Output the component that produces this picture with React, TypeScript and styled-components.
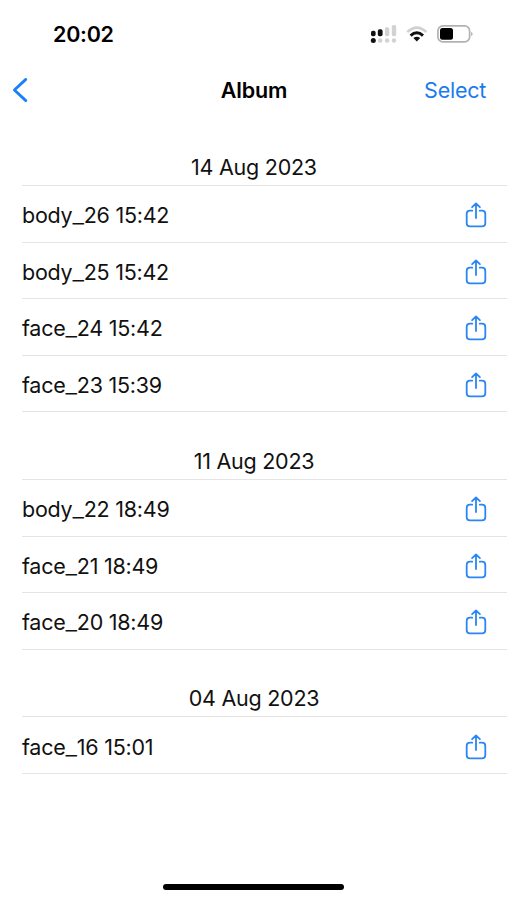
import React from "react";
import styled, { createGlobalStyle } from "styled-components";

const Global = createGlobalStyle`
  *{box-sizing:border-box}
  body{margin:0;background:#fff;color:#111;font-family:Inter,sans-serif}
  button{font:inherit;color:#1a7bf0;background:none;border:0;padding:0}
`;
const Screen = styled.main`
  width:507px;height:900px;overflow:hidden;display:flex;flex-direction:column;
`;
const Status = styled.header`
  height:66px;flex:none;padding:2px 33px 0 53px;display:flex;align-items:center;justify-content:space-between;
`;
const Time = styled.time`font-size:21.5px;font-weight:600;line-height:28px;letter-spacing:-.25px;color:#000;`;
const Indicators = styled.div`display:flex;align-items:center;`;
const Nav = styled.nav`
  height:48px;flex:none;display:grid;grid-template-columns:1fr auto 1fr;align-items:center;padding:0 11px 0 12px;
`;
const Back = styled.button`justify-self:start;display:flex;`;
const Title = styled.h1`margin:0;font-size:21.5px;font-weight:600;line-height:28px;letter-spacing:-.1px;color:#000;`;
const Select = styled.button`justify-self:end;margin-right:10px;font-size:21.5px;line-height:28px;letter-spacing:-.25px;`;
const Albums = styled.div`padding-top:30px;flex:1;`;
const Group = styled.section`padding-bottom:25.6px;`;
const DateTitle = styled.h2`
  margin:0 0 0 22px;padding:9px 21px 4px 0;height:42px;font-size:21.5px;line-height:28px;font-weight:400;letter-spacing:-.25px;text-align:center;border-bottom:1px solid #e4e4e5;
`;
const Row = styled.div`
  height:56.6px;margin-left:22px;padding:3px 20.5px 0 0;display:flex;align-items:center;justify-content:space-between;border-bottom:1px solid #e4e4e5;font-size:21.5px;
`;
const Name = styled.span`letter-spacing:-.25px;`;
const Underscore = styled.span`font-size:1.2em;font-weight:300;line-height:0;`;
const Share = styled.button`display:flex;`;
const Home = styled.div`width:181px;height:6px;border-radius:3px;background:#000;margin:0 auto 10px;flex:none;`;

const groups = [
  { date: "14 Aug 2023", items: ["body_26 15:42", "body_25 15:42", "face_24 15:42", "face_23 15:39"] },
  { date: "11 Aug 2023", items: ["body_22 18:49", "face_21 18:49", "face_20 18:49"] },
  { date: "04 Aug 2023", items: ["face_16 15:01"] },
];

const ShareIcon = () => (
  <svg width="22" height="26" viewBox="0 0 22 26" fill="none" stroke="#2a86f3" strokeWidth="1.8" strokeLinecap="round" strokeLinejoin="round">
    <path d="M7.2 8.7H5Q1.7 8.7 1.7 11.9V21.2Q1.7 24.4 5 24.4H17Q20.3 24.4 20.3 21.2V11.9Q20.3 8.7 17 8.7H14.8M11 16V1.8M7.1 5.2L11 1.5L14.9 5.2" />
  </svg>
);

const FileName = ({ value }: { value: string }) => {
  const [kind, rest] = value.split("_");
  return <Name>{kind}<Underscore>_</Underscore>{rest}</Name>;
};

export default function App() {
  return (
    <Screen>
      <Global />
      <Status>
        <Time>20:02</Time>
        <Indicators>
          <svg width="104" height="20" viewBox="370 24 104 20">
            <g fill="#111">
              <rect x="371" y="30.8" width="4.6" height="5.4" rx="1.8" /><rect x="377.8" y="29.3" width="4.8" height="6.9" rx="1.8" />
              <circle cx="373.3" cy="40.5" r="2.5" />
            </g>
            <g fill="#d2d2d2">
              <rect x="384.9" y="27.2" width="4.4" height="9" rx="1.8" /><rect x="391.8" y="25" width="4.4" height="11.2" rx="1.8" />
              <circle cx="380.2" cy="40.5" r="2.2" /><circle cx="387.1" cy="40.5" r="2.2" /><circle cx="394" cy="40.5" r="2.2" />
            </g>
            <g fill="none" strokeWidth="2.6">
              <path d="M407.3 32Q416.8 23.3 426.3 32" stroke="#d0d0d0" />
              <path d="M410.6 35.6Q416.8 29.9 423 35.6" stroke="#111" strokeWidth="3" />
              <path d="M413.4 38Q416.8 35.4 420.2 38L416.8 41.4Z" fill="#111" />
            </g>
            <rect x="437.9" y="25.9" width="31.7" height="16" rx="5" fill="none" stroke="#b2b2b2" strokeWidth="1.7" />
            <rect x="440" y="28" width="13" height="11.8" rx="2.5" fill="#000" />
            <path d="M471.2 31.8Q474 34 471.2 36.2Z" fill="#aaa" />
          </svg>
        </Indicators>
      </Status>
      <Nav>
        <Back aria-label="Back"><svg width="16" height="26" viewBox="0 0 16 26" fill="none" stroke="#1780fa" strokeWidth="2.8" strokeLinecap="round" strokeLinejoin="round"><path d="M13.8 2.4L2.4 13L13.8 23.6" /></svg></Back>
        <Title>Album</Title>
        <Select>Select</Select>
      </Nav>
      <Albums>
        {groups.map((g) => (
          <Group key={g.date}>
            <DateTitle>{g.date}</DateTitle>
            {g.items.map((n) => (
              <Row key={n}>
                <FileName value={n} />
                <Share aria-label={`Share ${n}`}><ShareIcon /></Share>
              </Row>
            ))}
          </Group>
        ))}
      </Albums>
      <Home />
    </Screen>
  );
}
